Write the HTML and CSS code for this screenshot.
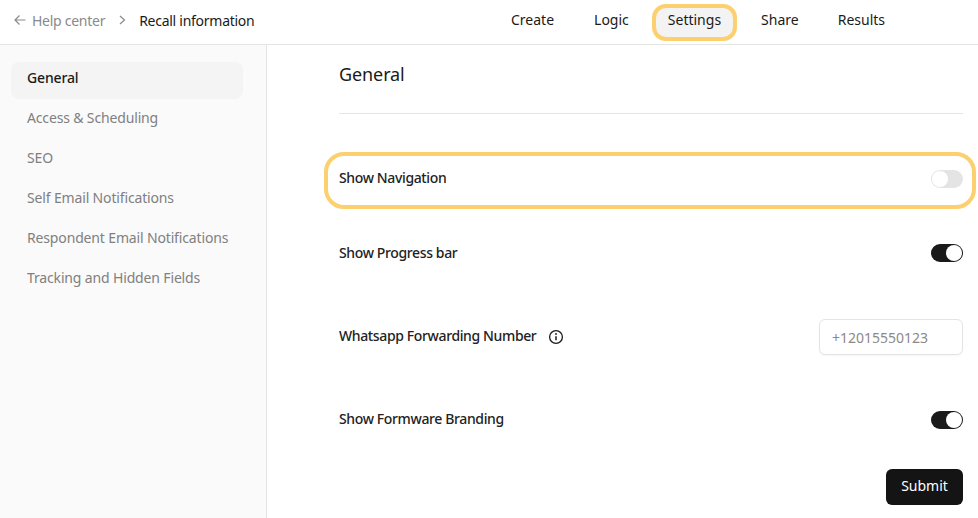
FILE: index.html
```html
<!DOCTYPE html>
<html lang="en">
<head>
<meta charset="utf-8">
<title>Settings</title>
<link rel="stylesheet" href="styles.css">
</head>
<body>
<header class="topbar">
  <nav class="crumbs">
    <svg class="back" width="12" height="12" viewBox="0 0 12 12" aria-hidden="true"><path d="M11.5 6H1M5.5 1.5 1 6l4.5 4.5" fill="none" stroke="#8a8a8a" stroke-width="1.2"/></svg>
    <span class="crumb-muted">Help center</span>
    <svg class="sep" width="7" height="10" viewBox="0 0 7 10" aria-hidden="true"><path d="M1 1l4.5 4L1 9" fill="none" stroke="#8a8a8a" stroke-width="1.2"/></svg>
    <span class="crumb-current">Recall information</span>
  </nav>
  <nav class="tabs">
    <span class="tab">Create</span>
    <span class="tab">Logic</span>
    <span class="tab tab-active">Settings</span>
    <span class="tab">Share</span>
    <span class="tab">Results</span>
  </nav>
</header>
<div class="body">
  <aside class="sidebar">
    <a class="side-item side-active">General</a>
    <a class="side-item">Access &amp; Scheduling</a>
    <a class="side-item">SEO</a>
    <a class="side-item">Self Email Notifications</a>
    <a class="side-item">Respondent Email Notifications</a>
    <a class="side-item">Tracking and Hidden Fields</a>
  </aside>
  <main class="content">
    <h1 class="title">General</h1>
    <div class="row row-nav">
      <span class="label">Show Navigation</span>
      <span class="switch"><span class="knob"></span></span>
    </div>
    <div class="row row-progress">
      <span class="label">Show Progress bar</span>
      <span class="switch switch-on"><span class="knob"></span></span>
    </div>
    <div class="row row-whatsapp">
      <span class="label">Whatsapp Forwarding Number
        <svg class="info" width="16" height="16" viewBox="0 0 16 16" aria-hidden="true"><circle cx="8" cy="8" r="6.4" fill="none" stroke="#1a1a1a" stroke-width="1.3"/><path d="M8 7.2v4" stroke="#1a1a1a" stroke-width="1.5"/><circle cx="8" cy="5" r="0.9" fill="#1a1a1a"/></svg>
      </span>
      <input class="phone" type="text" placeholder="+12015550123">
    </div>
    <div class="row row-branding">
      <span class="label">Show Formware Branding</span>
      <span class="switch switch-on"><span class="knob"></span></span>
    </div>
    <div class="actions"><button class="submit" type="button">Submit</button></div>
  </main>
</div>
</body>
</html>
```
FILE: styles.css
```css
* { box-sizing: border-box; }
html, body { margin: 0; height: 100%; }
body {
  height: 518px;
  overflow: hidden;
  background: #fff;
  color: #1a1a1a;
  font-family: "Noto Sans", "Open Sans", sans-serif;
  font-size: 14px;
  display: flex;
  flex-direction: column;
}
.topbar {
  height: 45px;
  flex: none;
  border-bottom: 1px solid #e4e4e4;
  display: flex;
  align-items: center;
  padding: 0 0 4px 14px;
}
.crumbs { display: flex; align-items: center; width: 497px; letter-spacing: -0.27px; }
.back { margin-right: 6px; }
.crumb-muted { color: #8a8a8a; }
.sep { margin: 0 13px 0 14px; }
.crumb-current { color: #1a1a1a; }
.tabs { display: flex; align-items: center; }
.tab { margin-right: 40px; line-height: 30px; }
.tab:nth-child(4) { margin-right: 39px; }
.tab-active {
  position: relative;
  margin-left: -1px;
  margin-right: 40px;
}
.tab-active::before {
  content: "";
  position: absolute;
  z-index: -1;
  inset: -1px -16px -6px -16px;
  background: #f3f3f3;
  border-radius: 14px;
}
.tab-active::after {
  content: "";
  position: absolute;
  inset: -1px -16px -6px -16px;
  border: 4px solid #fdd06f;
  border-radius: 14px;
}
.body { flex: 1; display: flex; min-height: 0; }
.sidebar {
  width: 267px;
  flex: none;
  background: #fafafa;
  border-right: 1px solid #e4e4e4;
  padding: 17px 23px 0 11px;
  display: flex;
  flex-direction: column;
  gap: 3px;
}
.side-item {
  height: 37px;
  line-height: 32px;
  padding-left: 16px;
  color: #808080;
  border-radius: 8px;
  white-space: nowrap;
  letter-spacing: -0.15px;
}
.side-active { background: #f4f4f4; color: #1a1a1a; font-weight: 500; }
.content { flex: 1; padding: 0 15px 0 72px; display: flex; flex-direction: column; }
.title {
  margin: 0;
  height: 69px;
  padding-top: 15px;
  font-size: 18px;
  line-height: 28px;
  font-weight: 400;
  letter-spacing: -0.1px;
  border-bottom: 1px solid #e4e4e4;
}
.row { display: flex; align-items: center; justify-content: space-between; height: 40px; position: relative; }
.row-nav { margin-top: 45px; }
.row-nav::after {
  content: "";
  position: absolute;
  inset: -7px -13px -10px -15px;
  border: 4px solid #fdd06f;
  border-radius: 20px;
}
.row-progress { margin-top: 34px; }
.row-whatsapp { margin-top: 44px; }
.row-branding { margin-top: 43px; }
.label {
  display: flex;
  align-items: center;
  gap: 12px;
  line-height: 20px;
  padding-bottom: 2px;
  color: #222;
  font-weight: 500;
  letter-spacing: -0.37px;
}
.row-progress .label { padding-bottom: 0; }
.info { margin-top: 2px; }
.switch {
  width: 32px;
  height: 18px;
  border-radius: 9px;
  background: #e4e4e4;
  display: flex;
  align-items: center;
  padding: 1px;
}
.switch .knob { width: 16px; height: 16px; border-radius: 50%; background: #fff; }
.switch-on { background: #1a1a1a; justify-content: flex-end; }
.phone {
  width: 144px;
  height: 36px;
  border: 1px solid #e4e4e4;
  border-radius: 6px;
  padding: 0 12px;
  font: inherit;
  box-shadow: 0 1px 2px rgba(0,0,0,.04);
}
.phone::placeholder { color: #8a8a8a; opacity: 1; }
.actions { display: flex; justify-content: flex-end; margin-top: 29px; }
.submit {
  width: 77px;
  height: 36px;
  border: 0;
  border-radius: 6px;
  background: #141414;
  color: #fff;
  font: inherit;
  padding: 0 0 4px;
}
```
